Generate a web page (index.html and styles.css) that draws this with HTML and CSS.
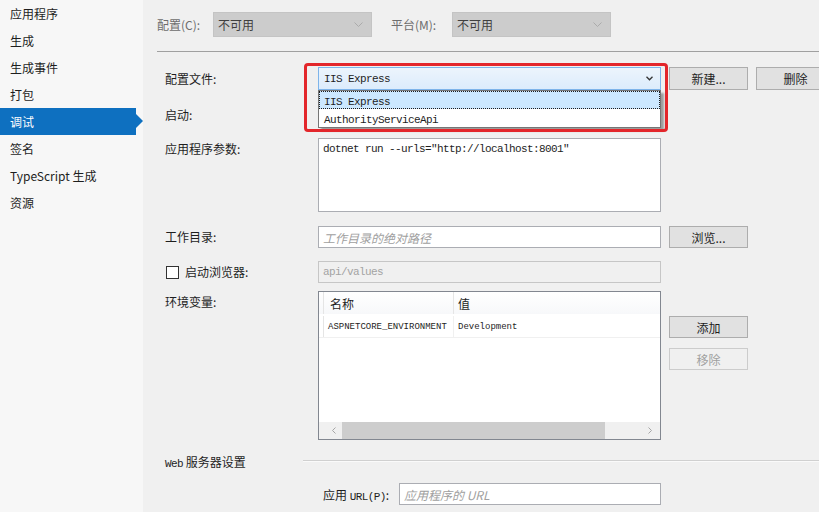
FILE: index.html
```html
<!DOCTYPE html>
<html lang="zh-CN">
<head>
<meta charset="utf-8">
<title>调试</title>
<link rel="stylesheet" href="styles.css">
</head>
<body>
<div class="app">
  <nav class="sidebar">
    <div class="nav-item">应用程序</div>
    <div class="nav-item">生成</div>
    <div class="nav-item">生成事件</div>
    <div class="nav-item">打包</div>
    <div class="nav-item active">调试</div>
    <div class="nav-item">签名</div>
    <div class="nav-item">TypeScript 生成</div>
    <div class="nav-item">资源</div>
  </nav>
  <main class="main">
    <div class="topbar">
      <span class="top-label">配置(C):</span>
      <div class="combo disabled"><span>不可用</span><svg width="9" height="5" viewBox="0 0 9 5"><path d="M0.5 0.5 L4.5 4.5 L8.5 0.5" fill="none" stroke="#ababab" stroke-width="1"/></svg></div>
      <span class="top-label plat">平台(M):</span>
      <div class="combo disabled"><span>不可用</span><svg width="9" height="5" viewBox="0 0 9 5"><path d="M0.5 0.5 L4.5 4.5 L8.5 0.5" fill="none" stroke="#ababab" stroke-width="1"/></svg></div>
    </div>
    <div class="form">
      <div class="row row-profile">
        <span class="lbl">配置文件:</span>
        <div class="combo profile"><span class="mono">IIS Express</span><svg width="7" height="5" viewBox="0 0 7 5"><path d="M0.5 0.8 L3.5 3.8 L6.5 0.8" fill="none" stroke="#333" stroke-width="1.3"/></svg></div>
        <button class="btn">新建...</button>
        <button class="btn">删除</button>
        <div class="dropdown">
          <div class="dd-item selected"><span class="mono">IIS Express</span></div>
          <div class="dd-item"><span class="mono">AuthorityServiceApi</span></div>
        </div>
        <div class="callout"></div>
      </div>
      <div class="row row-launch">
        <span class="lbl">启动:</span>
        <div class="combo launch"></div>
      </div>
      <div class="row row-args">
        <span class="lbl">应用程序参数:</span>
        <div class="textarea mono">dotnet run --urls="http://localhost:8001"</div>
      </div>
      <div class="row row-workdir">
        <span class="lbl">工作目录:</span>
        <div class="input"><span class="placeholder">工作目录的绝对路径</span></div>
        <button class="btn">浏览...</button>
      </div>
      <div class="row row-browser">
        <span class="lbl check-lbl"><span class="checkbox"></span>启动浏览器:</span>
        <div class="input disabled-input"><span class="mono">api/values</span></div>
      </div>
      <div class="row row-env">
        <span class="lbl">环境变量:</span>
        <div class="env-table">
          <div class="env-head">
            <span class="gutter"></span>
            <span class="cell c-name">名称</span>
            <span class="cell c-val">值</span>
          </div>
          <div class="env-row">
            <span class="gutter"></span>
            <span class="cell c-name mono-sm">ASPNETCORE_ENVIRONMENT</span>
            <span class="cell c-val mono-sm">Development</span>
          </div>
          <div class="env-fill"></div>
          <div class="hscroll">
            <span class="arrow left"><svg width="4" height="7" viewBox="0 0 4 7"><path d="M3.5 0.5 L0.5 3.5 L3.5 6.5" fill="none" stroke="#a6a6a6" stroke-width="1"/></svg></span>
            <span class="thumb"></span>
            <span class="track"></span>
            <span class="arrow right"><svg width="4" height="7" viewBox="0 0 4 7"><path d="M0.5 0.5 L3.5 3.5 L0.5 6.5" fill="none" stroke="#a6a6a6" stroke-width="1"/></svg></span>
          </div>
        </div>
        <div class="env-buttons">
          <button class="btn">添加</button>
          <button class="btn btn-disabled">移除</button>
        </div>
      </div>
      <div class="row row-section">
        <span class="section-title"><span class="mono">Web</span> 服务器设置</span>
        <span class="section-line"></span>
      </div>
      <div class="row row-url">
        <span class="url-lbl">应用 <span class="mono">URL(P)</span>:</span>
        <div class="input url-input"><span class="placeholder">应用程序的 URL</span></div>
      </div>
    </div>
  </main>
</div>
</body>
</html>
```
FILE: styles.css
```css
* { box-sizing: border-box; }
html, body {
  margin: 0;
  width: 819px;
  height: 512px;
  overflow: hidden;
}
body {
  font-family: "Noto Sans CJK SC", "Noto Sans", sans-serif;
  font-size: 12px;
  color: #1e1e1e;
  background: #f0f0f0;
}
.mono {
  font-family: "Liberation Mono", "DejaVu Sans Mono", monospace;
  font-size: 11px;
  letter-spacing: -0.6px;
}
.mono-sm {
  font-family: "Liberation Mono", "DejaVu Sans Mono", monospace;
  font-size: 9px;
}
.app {
  display: flex;
  height: 512px;
}
.sidebar {
  width: 143px;
  flex: none;
  background: #f7f7f7;
}
.nav-item {
  position: relative;
  width: 136px;
  height: 27px;
  line-height: 27px;
  padding-left: 10px;
  white-space: nowrap;
}
.nav-item.active {
  background: #0e70c0;
  color: #fff;
}
.nav-item.active::after {
  content: "";
  position: absolute;
  right: -7px;
  top: 6px;
  border-top: 7.5px solid transparent;
  border-bottom: 7.5px solid transparent;
  border-left: 7px solid #0e70c0;
}
.main {
  flex: 1;
  min-width: 0;
  background: #f0f0f0;
}
.topbar {
  margin-left: 14px;
  display: flex;
  align-items: center;
  padding: 12px 0 14px;
  border-bottom: 1px solid #a0a0a0;
}
.top-label {
  color: #6d6d6d;
  width: 56px;
  flex: none;
}
.top-label.plat {
  margin-left: 19px;
  width: 61px;
}
.combo {
  display: flex;
  align-items: center;
  justify-content: space-between;
  border: 1px solid;
  flex: none;
}
.combo.disabled {
  width: 159px;
  height: 25px;
  padding: 0 8px 0 4px;
  background: #cccccc;
  border-color: #c4c4c4;
  color: #3f3f3f;
}
.form {
  padding-left: 22px;
}
.row {
  position: relative;
  display: flex;
  align-items: flex-start;
}
.lbl {
  width: 153px;
  flex: none;
  line-height: 22px;
  white-space: nowrap;
}
.btn {
  flex: none;
  width: 79px;
  height: 22px;
  margin: 0 0 0 8px;
  padding: 0;
  font-family: "Noto Sans CJK SC", "Noto Sans", sans-serif;
  font-size: 12px;
  color: #1e1e1e;
  background: #e1e1e1;
  border: 1px solid #adadad;
}
.btn-disabled {
  background: #f0f0f0;
  border-color: #cccccc;
  color: #a0a0a0;
}

/* profile row */
.row-profile {
  margin-top: 15px;
}
.row-profile .lbl { line-height: 23px; }
.row-profile .btn { height: 23px; }
.combo.profile {
  width: 343px;
  height: 23px;
  padding: 0 7px 0 5px;
  background: linear-gradient(#ecf4fc, #dcecfc);
  border-color: #7eb4ea;
}
.dropdown {
  position: absolute;
  left: 153px;
  top: 23px;
  width: 343px;
  height: 38px;
  background: #fff;
  border: 1px solid #767676;
  box-shadow: 3px 3px 2px rgba(0, 0, 0, 0.35);
  padding: 0;
  z-index: 2;
}
.dd-item {
  height: 18px;
  line-height: 16px;
  padding-left: 4px;
  border: 1px dotted transparent;
}
.dd-item.selected {
  background: #cce8ff;
  border-color: #1e1e1e;
}
.callout {
  position: absolute;
  left: 139px;
  top: -4px;
  width: 364px;
  height: 69px;
  border: 3px solid #e3262b;
  border-radius: 4px;
  z-index: 3;
}

/* launch row */
.row-launch {
  margin-top: 14px;
}
.combo.launch {
  width: 343px;
  height: 22px;
  background: #e5e5e5;
  border-color: #acacac;
}

/* args */
.row-args {
  margin-top: 12px;
}
.textarea {
  width: 343px;
  height: 74px;
  background: #fff;
  border: 1px solid #abadb3;
  padding: 2px 4px;
  line-height: 16px;
  flex: none;
}

/* inputs */
.row-workdir { margin-top: 14px; }
.row-browser { margin-top: 13px; }
.input {
  width: 343px;
  height: 22px;
  flex: none;
  display: flex;
  align-items: center;
  padding: 0 4px;
  background: #fff;
  border: 1px solid #abadb3;
}
.placeholder {
  font-style: italic;
  color: #a0a0a0;
}
.disabled-input {
  background: #f0f0f0;
  border-color: #c6c6c6;
  color: #a3a3a3;
}
.check-lbl {
  display: flex;
  align-items: center;
  padding-left: 1px;
}
.checkbox {
  width: 13px;
  height: 13px;
  background: #fff;
  border: 1px solid #333;
  margin-right: 6px;
}

/* env */
.row-env { margin-top: 8px; }
.env-table {
  width: 343px;
  height: 149px;
  flex: none;
  display: flex;
  flex-direction: column;
  background: #fff;
  border: 1px solid #828790;
}
.env-head, .env-row {
  display: flex;
  align-items: stretch;
}
.env-head {
  height: 22px;
  background: linear-gradient(#ffffff, #f7f8fa);
}
.env-row {
  height: 24px;
  padding-top: 2px;
  border-bottom: 1px solid #f0f0f0;
}
.gutter {
  width: 5px;
  flex: none;
  border-right: 1px solid #e5e5e5;
}
.cell {
  display: flex;
  align-items: center;
  padding-left: 5px;
  white-space: nowrap;
  overflow: hidden;
}
.c-name {
  width: 130px;
  flex: none;
  border-right: 1px solid #e5e5e5;
}
.env-row .c-name { padding-left: 4px; }
.env-row .c-name { border-right-color: #f0f0f0; }
.env-head .c-name { padding-left: 6px; }
.c-val { flex: 1; padding-left: 4px; }
.env-fill { flex: 1; }
.hscroll {
  height: 17px;
  display: flex;
  align-items: stretch;
  background: #f0f0f0;
}
.arrow {
  display: flex;
  align-items: center;
  justify-content: center;
  flex: none;
}
.arrow.left { width: 23px; justify-content: flex-start; padding-left: 13px; }
.arrow.right { width: 22px; justify-content: flex-end; padding-right: 8px; }
.thumb {
  width: 263px;
  flex: none;
  background: #cdcdcd;
}
.track { flex: 1; }
.env-buttons {
  display: flex;
  flex-direction: column;
  padding-top: 25px;
  gap: 10px;
}

/* section */
.row-section {
  margin-top: 12px;
  height: 18px;
  align-items: center;
}
.section-title {
  width: 138px;
  flex: none;
  white-space: nowrap;
}
.section-line {
  flex: 1;
  height: 0;
  border-top: 1px solid #d0d0d0;
  border-bottom: 1px solid #fafafa;
}
.row-url {
  margin-top: 13px;
  align-items: center;
}
.url-lbl {
  margin-left: 158px;
  width: 76px;
  flex: none;
  white-space: nowrap;
}
.url-input {
  width: 262px;
}
```
